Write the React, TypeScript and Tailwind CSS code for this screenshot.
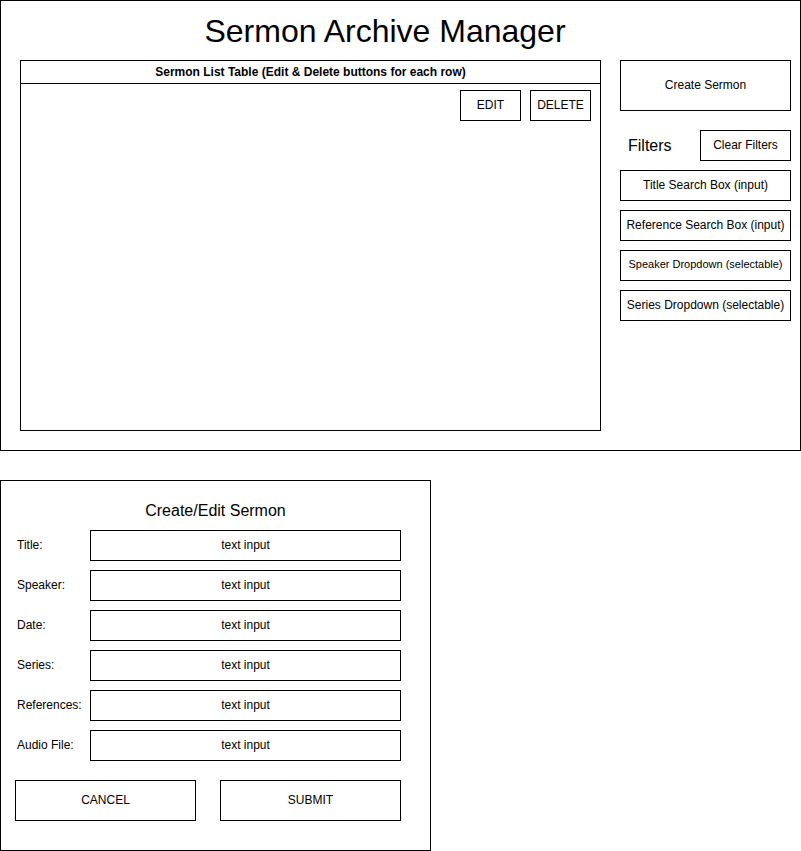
import React from 'react';

const Box: React.FC<{ className?: string; size?: string; children?: React.ReactNode }> = ({ className = '', size = 'text-[12px]', children }) => (
  <div className={`border border-black flex items-center justify-center pb-[2px] ${size} ${className}`}>{children}</div>
);

const fields = ['Title:', 'Speaker:', 'Date:', 'Series:', 'References:', 'Audio File:'];

const filters = [
  { label: 'Title Search Box (input)', size: 'text-[12px]' },
  { label: 'Reference Search Box (input)', size: 'text-[12px]' },
  { label: 'Speaker Dropdown (selectable)', size: 'text-[11px]' },
  { label: 'Series Dropdown (selectable)', size: 'text-[12px]' },
];

export default function App() {
  return (
    <div className="w-[801px] h-[851px] bg-white text-black font-['Liberation_Sans',Arial,sans-serif] leading-none">
      <div className="w-[801px] h-[451px] border border-black flex flex-col">
        <div className="w-[768px] h-[59px] flex items-center justify-center text-[32px]">Sermon Archive Manager</div>
        <div className="flex pl-[19px]">
          <div className="w-[581px] h-[371px] border border-black flex flex-col">
            <div className="h-[23px] border-b border-black flex items-center justify-center text-[12px] font-bold">
              Sermon List Table (Edit &amp; Delete buttons for each row)
            </div>
            <div className="flex justify-end gap-[9px] pt-[6px] pr-[9px]">
              <Box className="w-[61px] h-[31px]">EDIT</Box>
              <Box className="w-[61px] h-[31px]">DELETE</Box>
            </div>
          </div>
          <div className="ml-[19px] w-[171px] flex flex-col">
            <Box className="h-[51px]">Create Sermon</Box>
            <div className="mt-[19px] flex items-center justify-between">
              <span className="pl-[8px] text-[16px]">Filters</span>
              <Box className="w-[91px] h-[31px]">Clear Filters</Box>
            </div>
            <div className="mt-[9px] flex flex-col gap-[9px]">
              {filters.map(f => (
                <Box key={f.label} size={f.size} className="h-[31px]">{f.label}</Box>
              ))}
            </div>
          </div>
        </div>
      </div>

      <div className="mt-[29px] w-[431px] h-[371px] border border-black flex flex-col">
        <div className="h-[49px] flex items-center justify-center text-[16px] pt-[11px]">Create/Edit Sermon</div>
        <div className="flex flex-col gap-[9px]">
          {fields.map(f => (
            <div key={f} className="flex items-center pl-[16px]">
              <span className="w-[73px] text-[12px] pb-[2px]">{f}</span>
              <Box className="w-[311px] h-[31px]">text input</Box>
            </div>
          ))}
        </div>
        <div className="mt-[19px] flex gap-[24px] pl-[14px]">
          <Box className="w-[181px] h-[41px]">CANCEL</Box>
          <Box className="w-[181px] h-[41px]">SUBMIT</Box>
        </div>
      </div>
    </div>
  );
}
